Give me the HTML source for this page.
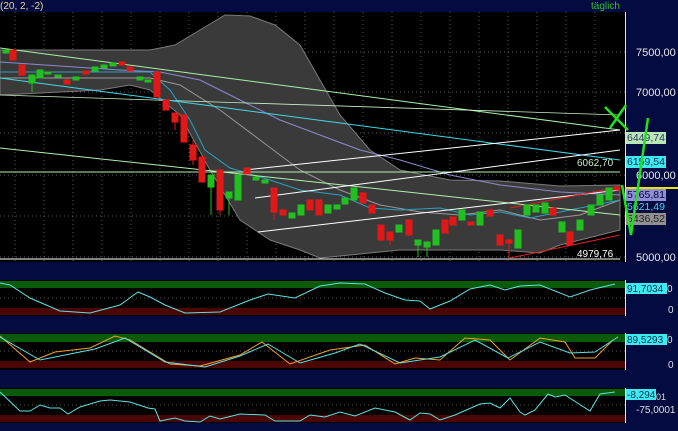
<!DOCTYPE html><html><head><meta charset="utf-8"><style>
body{margin:0;width:678px;height:431px;overflow:hidden;background:#020a3c;font-family:"Liberation Sans",sans-serif}
svg{display:block}
</style></head><body>
<svg width="678" height="431" viewBox="0 0 678 431" xmlns="http://www.w3.org/2000/svg" font-family="Liberation Sans, sans-serif">
<rect width="678" height="431" fill="#030b40"/>
<text x="0" y="9" font-size="10" fill="#e8d890">(20, 2, -2)</text>
<text x="591" y="9" font-size="10" fill="#2ec02e">täglich</text>
<!-- main chart -->
<rect x="0" y="12" width="625" height="250" fill="#000"/>
<g stroke="#5a5a5a" stroke-width="1" stroke-dasharray="1,3">
<path d="M0 52H625M0 92H625M0 133H625M0 175H625M0 216H625M0 257H625"/>
<path d="M15 12V262M44 12V262M73 12V262M102 12V262M131 12V262M160 12V262M189 12V262M218 12V262M247 12V262M276 12V262M305 12V262M334 12V262M363 12V262M392 12V262M421 12V262M450 12V262M479 12V262M508 12V262M537 12V262M566 12V262M595 12V262"/>
</g>
<path d="M0 50L150 50L175 45L200 30L225 15L250 16L275 25L300 45L320 80L340 115L370 150L400 170L450 180L500 181L560 186L620 185L620 230L600 235L560 245L540 253L500 250L400 250L350 255L320 258L300 250L270 240L240 220L210 170L180 115L150 90L130 85L100 90L0 95Z" fill="#3a3a3a" stroke="#7a7a7a"/>
<g fill="none" stroke-width="1">
<path d="M0 78L150 78L180 85L220 110L260 140L300 170L340 190L380 205L420 212L460 215L500 210L540 220L580 215L620 200" stroke="#999"/>
<path d="M0 62L120 70L160 72L200 80L240 100L280 120L320 135L360 150L400 160L450 175L500 185L560 192L620 195" stroke="#8a8ad0"/>
<path d="M0 72L150 72L170 90L190 120L205 150L230 168L270 180L300 190L340 195L370 208L400 210L440 208L470 215L500 212L530 218L560 212L590 206L620 200" stroke="#2aa0c0"/>
<path d="M0 48L620 130" stroke="#a8f0a8"/>
<path d="M0 95L620 115" stroke="#c8f0c8" stroke-width=".8"/>
<path d="M0 78L620 160" stroke="#40d8e8"/>
<path d="M0 172H620" stroke="#b0f0b0"/>
<path d="M0 148L620 215" stroke="#b0f0b0"/>
<path d="M245 170L620 130M255 198L620 150M258 232L620 190" stroke="#fff"/>
<path d="M510 258L620 235M510 208L620 187" stroke="#e02020"/>
<path d="M0 259H620" stroke="#fff"/>
</g>
<g stroke-width="1">
<g fill="#e01818" stroke="#e01818">
<rect x="10" y="50" width="6" height="10"/><rect x="19" y="65" width="6" height="10"/><rect x="64" y="80" width="6" height="4"/><rect x="83" y="71" width="6" height="3"/><rect x="119" y="62" width="6" height="3"/><rect x="127" y="67" width="6" height="4"/>
<rect x="154" y="72" width="6" height="25"/><rect x="163" y="100" width="6" height="10"/><rect x="172" y="113" width="6" height="9"/><path d="M175 122V130"/><rect x="181" y="115" width="6" height="27"/><rect x="190" y="145" width="6" height="15"/><path d="M193 140V165"/><rect x="199" y="157" width="6" height="25"/><rect x="217" y="170" width="6" height="40"/><path d="M220 210V215"/><rect x="244" y="168" width="6" height="6"/><rect x="271" y="188" width="6" height="24"/><path d="M274 212V220"/><rect x="280" y="210" width="6" height="5"/><rect x="307" y="200" width="6" height="10"/><rect x="316" y="200" width="6" height="15"/><rect x="360" y="193" width="6" height="10"/><rect x="369" y="205" width="6" height="8"/><rect x="378" y="225" width="6" height="15"/><rect x="387" y="232" width="6" height="8"/><path d="M390 240V245"/><rect x="406" y="220" width="6" height="15"/><rect x="442" y="220" width="6" height="13"/><rect x="450" y="217" width="6" height="8"/><rect x="468" y="222" width="6" height="3"/><rect x="487" y="210" width="6" height="6"/><rect x="497" y="235" width="6" height="10"/><rect x="506" y="240" width="6" height="3"/><path d="M509 243V258"/><rect x="550" y="208" width="6" height="7"/><rect x="567" y="232" width="6" height="13"/><rect x="614" y="187" width="6" height="3"/>
</g>
<g fill="#20c020" stroke="#20c020">
<rect x="3" y="50" width="6" height="3"/><rect x="29" y="75" width="6" height="8"/><path d="M32 83V92"/><rect x="37" y="70" width="6" height="8"/><rect x="45" y="72" width="6" height="2"/><rect x="55" y="75" width="6" height="2"/><rect x="73" y="77" width="6" height="3"/><rect x="92" y="67" width="6" height="4"/><rect x="101" y="65" width="6" height="3"/><rect x="110" y="63" width="6" height="3"/><rect x="137" y="77" width="6" height="3"/><rect x="145" y="80" width="6" height="2"/>
<rect x="208" y="175" width="6" height="12"/><path d="M211 187V215"/><rect x="226" y="192" width="6" height="6"/><path d="M229 198V215"/><rect x="235" y="175" width="6" height="25"/><rect x="253" y="177" width="6" height="3"/><rect x="262" y="180" width="6" height="3"/><rect x="289" y="213" width="6" height="5"/><rect x="298" y="205" width="6" height="10"/><rect x="325" y="205" width="6" height="8"/><rect x="334" y="205" width="6" height="4"/><rect x="342" y="198" width="6" height="6"/><rect x="351" y="188" width="6" height="12"/><rect x="396" y="225" width="6" height="7"/><rect x="415" y="240" width="6" height="5"/><path d="M418 245V257"/><rect x="424" y="242" width="6" height="5"/><path d="M427 247V257"/><rect x="433" y="230" width="6" height="15"/><rect x="459" y="210" width="6" height="10"/><rect x="477" y="212" width="6" height="13"/><rect x="515" y="230" width="6" height="18"/><rect x="524" y="205" width="6" height="10"/><rect x="533" y="205" width="6" height="7"/><rect x="542" y="203" width="6" height="10"/><rect x="559" y="222" width="6" height="10"/><rect x="577" y="220" width="6" height="10"/><rect x="588" y="205" width="6" height="10"/><rect x="597" y="195" width="6" height="10"/><rect x="606" y="188" width="6" height="12"/>
</g>
</g>
<text x="577" y="166" font-size="10" fill="#c8f0c8">6062,70</text>
<text x="577" y="257" font-size="10" fill="#fff">4979,76</text>
<!-- axis -->
<rect x="625" y="12" width="53" height="250" fill="#030b40"/>
<path d="M625.5 12V262" stroke="#f0e8b0"/>
<path d="M625 188H678" stroke="#f0e000" stroke-width="2"/>
<g font-size="11" fill="#e8e8e8"><text x="636" y="56">7500,00</text><text x="636" y="96">7000,00</text><text x="636" y="179">6000,00</text><text x="636" y="261">5000,00</text></g>
<rect x="626" y="132" width="40" height="12" fill="#b8e8b8"/><text x="627" y="141" font-size="10.5" fill="#336">6449,74</text>
<rect x="626" y="156" width="40" height="12" fill="#40e8f0"/><text x="627" y="165" font-size="10.5" fill="#035">6159,54</text>
<rect x="626" y="189" width="40" height="12" fill="#9090d8"/><text x="627" y="198" font-size="10.5" fill="#003">5765,81</text>
<text x="627" y="210" font-size="10.5" fill="#40d0f0">5621,49</text>
<rect x="626" y="213" width="40" height="12" fill="#909090"/><text x="627" y="222" font-size="10.5" fill="#222">5436,52</text>
<path d="M605 107L628 130M626 105L610 128M622 185L631 235L648 118" stroke="#20e020" stroke-width="2.5" fill="none"/>
<!-- panel 1 -->
<rect x="0" y="280" width="625" height="36" fill="#000"/>
<rect x="0" y="281" width="625" height="7" fill="#0a5a0a"/><rect x="0" y="308" width="625" height="7" fill="#4a0505"/>
<path d="M0 298H625" stroke="#555" stroke-dasharray="1,3"/>
<path d="M0 283L10 285L30 298L60 311L90 313L120 305L138 292L150 297L165 305L185 313L220 312L250 300L268 294L295 298L320 286L340 283L365 284L385 293L405 300L420 301L430 309L450 301L470 289L490 285L505 290L520 286L540 285L570 297L590 290L615 284" fill="none" stroke="#60e0e0"/>
<path d="M625.5 280V316" stroke="#f0e8b0"/>
<rect x="626" y="283" width="41" height="11" fill="#40e8f0"/><text x="627" y="292" font-size="10" fill="#035">91,7034</text><text x="667" y="292" font-size="10" fill="#ddd">0</text>
<text x="668" y="313" font-size="10" fill="#ddd">0</text>
<!-- panel 2 -->
<rect x="0" y="333" width="625" height="37" fill="#000"/>
<rect x="0" y="334" width="625" height="8" fill="#0a5a0a"/><rect x="0" y="361" width="625" height="7" fill="#4a0505"/>
<path d="M0 351H625" stroke="#555" stroke-dasharray="1,3"/>
<path d="M0 336L30 362L55 352L90 348L115 336L130 340L170 364L200 366L240 355L262 342L290 364L330 350L365 345L395 364L415 358L440 360L465 338L490 340L510 360L540 338L565 342L575 358L595 358L613 340" fill="none" stroke="#f0a030"/>
<path d="M0 337L40 360L70 354L95 349L125 338L165 362L205 367L240 356L268 344L300 363L335 353L360 344L400 363L440 357L475 340L508 358L540 342L570 353L595 352L618 337" fill="none" stroke="#60e0e0"/>
<path d="M625.5 333V370" stroke="#f0e8b0"/>
<rect x="626" y="334" width="41" height="11" fill="#40e8f0"/><text x="627" y="343" font-size="10" fill="#035">89,5293</text><text x="667" y="343" font-size="10" fill="#ddd">0</text>
<text x="668" y="368" font-size="10" fill="#ddd">0</text>
<!-- panel 3 -->
<rect x="0" y="388" width="625" height="35" fill="#000"/>
<rect x="0" y="389" width="625" height="7" fill="#0a5a0a"/><rect x="0" y="415" width="625" height="7" fill="#4a0505"/>
<path d="M0 405H625" stroke="#555" stroke-dasharray="1,3"/>
<path d="M0 392L20 411L30 411L40 405L50 408L60 408L68 414L80 407L100 401L110 400L130 402L148 408L155 409L160 421L175 418L185 421L200 422L210 416L220 419L240 414L265 415L275 421L300 421L310 415L325 417L340 412L355 416L375 408L395 412L410 420L420 413L430 414L440 420L455 415L480 404L490 403L500 408L510 398L520 412L525 415L535 410L548 394L555 397L565 395L590 411L600 394L615 392" fill="none" stroke="#60e0e0"/>
<path d="M625.5 388V423" stroke="#f0e8b0"/>
<rect x="626" y="389" width="30" height="11" fill="#40e8f0"/><text x="627" y="398" font-size="10" fill="#035">-8,2941</text><text x="656" y="400" font-size="9" fill="#ddd">01</text>
<text x="636" y="413" font-size="10" fill="#ddd">-75,0001</text>
</svg>
</body></html>
